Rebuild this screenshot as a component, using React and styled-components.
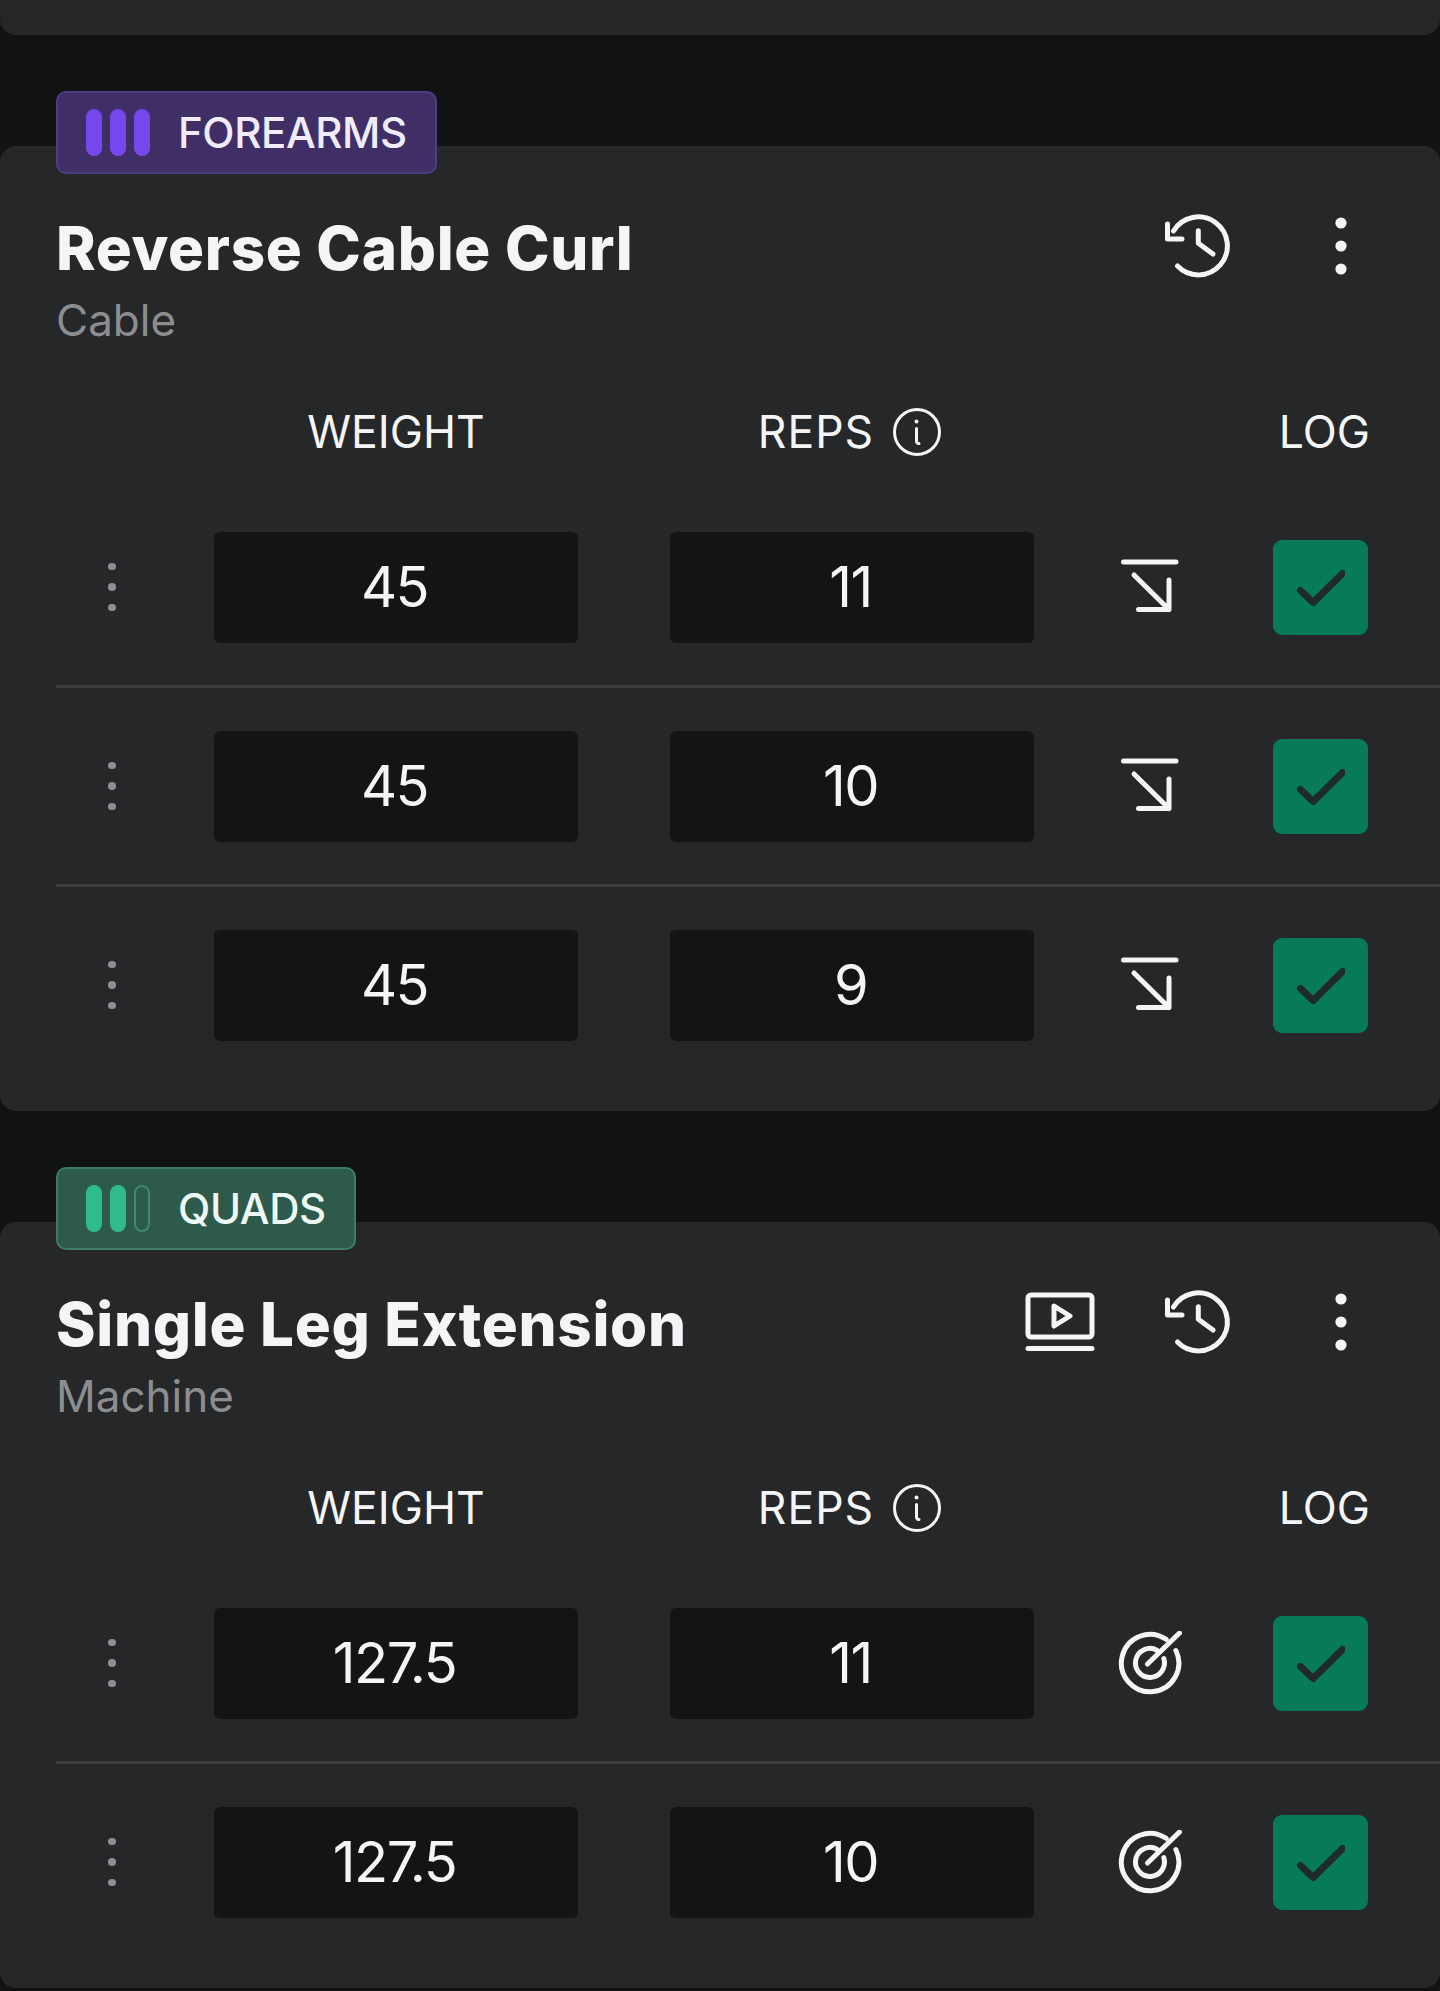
import React from "react";
import styled, { createGlobalStyle } from "styled-components";

const GlobalStyle = createGlobalStyle`
  html, body {
    margin: 0;
    padding: 0;
    background: #111214;
    font-family: "Inter", "Liberation Sans", sans-serif;
  }
`;

const Page = styled.div`
  width: 1440px;
  height: 1991px;
  overflow: hidden;
  background: #111214;
`;

const TopCard = styled.div`
  height: 35px;
  background: #252727;
  border-radius: 0 0 16px 16px;
  margin-bottom: 111px;
`;

const Card = styled.section`
  position: relative;
  background: #262729;
  border-radius: 16px;
  padding: 71px 0 0 56px;
  margin-bottom: 111px;
  height: ${({ $height }) => $height}px;
  box-sizing: border-box;
`;

const Badge = styled.div`
  position: absolute;
  left: 56px;
  top: -55px;
  height: 83px;
  box-sizing: border-box;
  display: flex;
  align-items: center;
  gap: 28px;
  padding: 0 28px;
  border-radius: 10px;
  border: 2px solid ${({ $border }) => $border};
  background: ${({ $bg }) => $bg};
  color: ${({ $text }) => $text};
  font-size: 42px;
  font-weight: 500;
  letter-spacing: -0.4px;
`;

const Bars = styled.div`
  display: flex;
  gap: 8px;
`;

const Bar = styled.span`
  width: 16px;
  height: 47px;
  box-sizing: border-box;
  border-radius: 8px;
  background: ${({ $on, $color }) => ($on ? $color : "transparent")};
  border: 2px solid ${({ $on, $color, $dim }) => ($on ? $color : $dim)};
`;

const CardHead = styled.div`
  display: flex;
  justify-content: space-between;
  padding-right: 93px;
  height: 185px;
`;

const Title = styled.h2`
  margin: -4px 0 0;
  font-size: 60px;
  line-height: 70px;
  font-weight: 800;
  letter-spacing: 0.7px;
  color: #f4f5f7;
`;

const Subtitle = styled.div`
  margin-top: 12px;
  font-size: 44px;
  line-height: 50px;
  color: #8b8d90;
`;

const HeadIcons = styled.div`
  display: flex;
  align-items: center;
  height: 57px;
  color: #f4f5f7;
`;

const IconSlot = styled.div`
  display: flex;
  align-items: center;
  justify-content: center;
  margin-left: ${({ $gap }) => $gap}px;
`;

const ColumnHead = styled.div`
  display: grid;
  grid-template-columns: 158px 364px 92px 364px 1fr;
  align-items: center;
  height: 60px;
  padding-right: 70px;
  margin-bottom: 27px;
  color: #f4f5f7;
  font-size: 44.5px;
`;

const WeightLabel = styled.div`
  grid-column: 2;
  text-align: center;
`;

const RepsLabel = styled.div`
  grid-column: 4;
  display: flex;
  align-items: center;
  justify-content: center;
  gap: 19px;
  padding-right: 5px;
  letter-spacing: 1px;
`;

const LogLabel = styled.div`
  grid-column: 5;
  text-align: right;
`;

const Row = styled.div`
  display: grid;
  grid-template-columns: 158px 364px 92px 364px 1fr 95px;
  align-items: center;
  height: 199px;
  box-sizing: border-box;
  padding: 0 72px 0 0;
  border-bottom: 3px solid ${({ $last }) => ($last ? "transparent" : "#3c3d3f")};
`;

const DragDots = styled.div`
  display: flex;
  flex-direction: column;
  align-items: center;
  gap: 13px;
  width: 112px;
  span {
    width: 7.5px;
    height: 7.5px;
    border-radius: 50%;
    background: #8e8f92;
  }
`;

const NumberBox = styled.div`
  height: 111px;
  box-sizing: border-box;
  padding-right: 3px;
  display: flex;
  align-items: center;
  justify-content: center;
  background: #131416;
  border-radius: 6px;
  color: #f4f5f7;
  font-size: 56px;
  letter-spacing: -1.5px;
`;

const RowIcon = styled.div`
  display: flex;
  justify-content: center;
  color: #f4f5f7;
  padding-right: 8px;
`;

const CheckBox = styled.div`
  width: 95px;
  height: 95px;
  border-radius: 9px;
  background: #077a5a;
  display: flex;
  align-items: center;
  justify-content: center;
`;

const Stroke = ({ w, h, vb, children, sw = 2 }) => (
  <svg
    width={w}
    height={h}
    viewBox={vb}
    fill="none"
    stroke="currentColor"
    strokeWidth={sw}
    strokeLinecap="round"
    strokeLinejoin="round"
  >
    {children}
  </svg>
);

const HistoryIcon = () => (
  <Stroke w={68} h={68} vb="0 0 68 68" sw={5}>
    <path d="M3.500 12 V27 H18" />
    <path d="M9.500 19 A29 29 0 1 1 13.500 54" />
    <path d="M34.300 18.700 V31.300 L49 42" />
  </Stroke>
);

const KebabIcon = () => (
  <svg width={12} height={58} viewBox="0 0 12 58" fill="currentColor">
    <circle cx="6" cy="6" r="5.600" />
    <circle cx="6" cy="29" r="5.600" />
    <circle cx="6" cy="52" r="5.600" />
  </svg>
);

const VideoIcon = () => (
  <Stroke w={70} h={60} vb="0 0 70 60" sw={5}>
    <rect x="3" y="3" width="64" height="42" rx="3" />
    <path d="M29 14 L45 24 L29 34 Z" />
    <path d="M3 56.500 H67" />
  </Stroke>
);

const InfoIcon = () => (
  <Stroke w={48} h={48} vb="0 0 48 48" sw={3}>
    <circle cx="24" cy="24" r="22.500" />
    <path d="M23.500 20.500 V32.500 Q23.500 35.500 26 35.500" />
    <circle cx="23.500" cy="13.500" r="2" fill="currentColor" stroke="none" />
  </Stroke>
);

const DropIcon = () => (
  <Stroke w={58} h={56} vb="0 0 58 56" sw={5}>
    <path d="M2.500 3 H55" />
    <path d="M13 16 L48 50.500 M48 21 V50.500 H17.500" />
  </Stroke>
);

const TargetIcon = () => (
  <Stroke w={64} h={64} vb="0 0 64 64" sw={5}>
    <path d="M57.900 19.500 A28.700 28.700 0 1 1 48.200 8.300" />
    <path d="M45.800 27.600 A14.500 14.500 0 1 1 38.900 19.200" />
    <path d="M29.500 33 L61.500 2" />
  </Stroke>
);

const CheckIcon = () => (
  <Stroke w={48} h={44} vb="0 0 48 44" sw={7}>
    <path d="M3.500 25.500 L16.200 37.500 L45.500 8.500" stroke="#1f2b29" />
  </Stroke>
);

const themes = {
  purple: { bg: "#3f2f66", border: "#4f3d80", text: "#f1ecfb", bar: "#7747ee", dim: "#5a4a8a" },
  green: { bg: "#2d5a4b", border: "#3f7b66", text: "#eef8f4", bar: "#2fbb8c", dim: "#3f8a70" },
};

const exercises = [
  {
    muscle: "FOREARMS",
    theme: "purple",
    level: 3,
    name: "Reverse Cable Curl",
    kind: "Cable",
    video: false,
    height: 965,
    hint: "drop",
    sets: [
      { weight: "45", reps: "11" },
      { weight: "45", reps: "10" },
      { weight: "45", reps: "9" },
    ],
  },
  {
    muscle: "QUADS",
    theme: "green",
    level: 2,
    name: "Single Leg Extension",
    kind: "Machine",
    video: true,
    height: 766,
    hint: "target",
    sets: [
      { weight: "127.5", reps: "11" },
      { weight: "127.5", reps: "10" },
    ],
  },
];

const App = () => {
  return (
    <Page>
      <GlobalStyle />
      <TopCard />
      {exercises.map((ex) => {
        const t = themes[ex.theme];
        return (
          <Card key={ex.name} $height={ex.height}>
            <Badge $bg={t.bg} $border={t.border} $text={t.text}>
              <Bars>
                {[1, 2, 3].map((n) => (
                  <Bar key={n} $on={n <= ex.level} $color={t.bar} $dim={t.dim} />
                ))}
              </Bars>
              {ex.muscle}
            </Badge>
            <CardHead>
              <div>
                <Title>{ex.name}</Title>
                <Subtitle>{ex.kind}</Subtitle>
              </div>
              <HeadIcons>
                {ex.video && (
                  <IconSlot $gap={0}>
                    <VideoIcon />
                  </IconSlot>
                )}
                <IconSlot $gap={69}>
                  <HistoryIcon />
                </IconSlot>
                <IconSlot $gap={103}>
                  <KebabIcon />
                </IconSlot>
              </HeadIcons>
            </CardHead>
            <ColumnHead>
              <WeightLabel>WEIGHT</WeightLabel>
              <RepsLabel>
                REPS <InfoIcon />
              </RepsLabel>
              <LogLabel>LOG</LogLabel>
            </ColumnHead>
            {ex.sets.map((set, i) => (
              <Row key={i} $last={i === ex.sets.length - 1}>
                <DragDots>
                  <span />
                  <span />
                  <span />
                </DragDots>
                <NumberBox>{set.weight}</NumberBox>
                <div />
                <NumberBox>{set.reps}</NumberBox>
                <RowIcon>{ex.hint === "drop" ? <DropIcon /> : <TargetIcon />}</RowIcon>
                <CheckBox>
                  <CheckIcon />
                </CheckBox>
              </Row>
            ))}
          </Card>
        );
      })}
    </Page>
  );
};

export default App;
